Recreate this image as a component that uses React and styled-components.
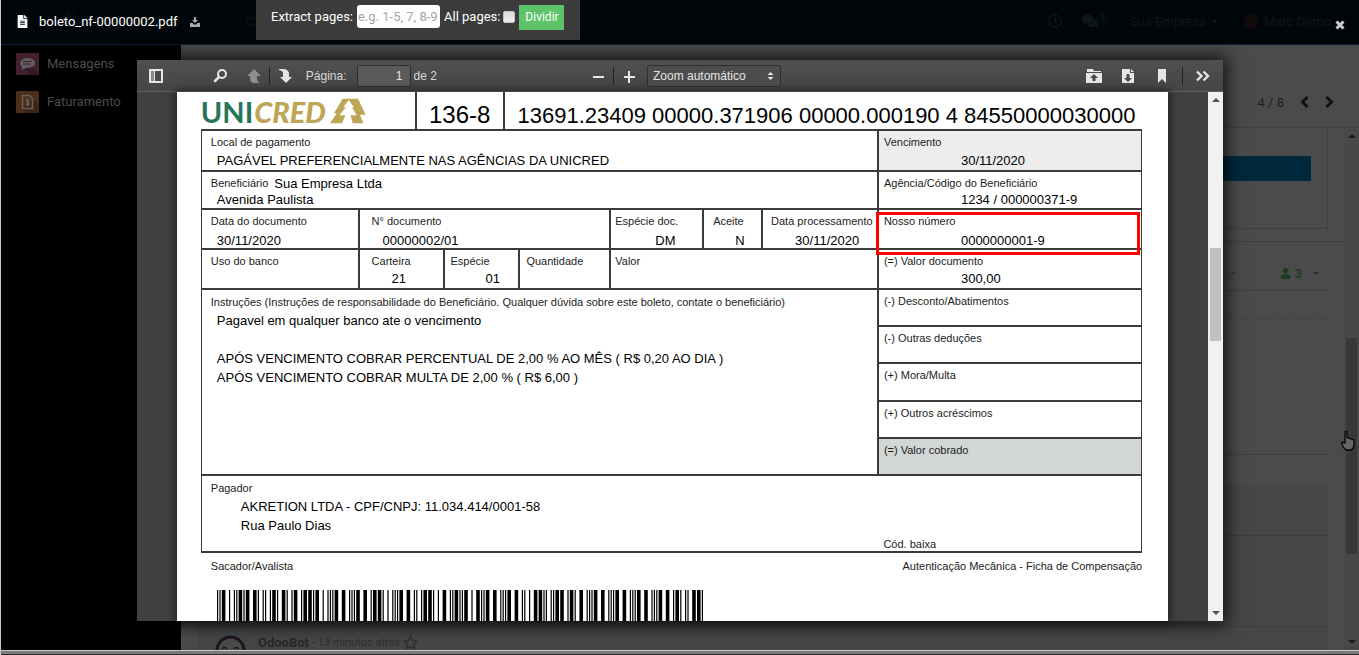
import React from "react";
import styled, { createGlobalStyle, css } from "styled-components";
import { FaFileAlt, FaUser, FaRegStar, FaRegClock, FaComments } from "react-icons/fa";

const GlobalStyle = createGlobalStyle`
  *, *::before, *::after { box-sizing: border-box; }
  html, body, #root { height: 100%; }
  body { margin: 0; overflow: hidden; background: #4b4b4b; }
  h1, h2, p { margin: 0; font-size: inherit; font-weight: inherit; }
  button { margin: 0; padding: 0; border: 0; background: none; color: inherit; font: inherit; cursor: pointer; }
`;

const ui = css`
  font-family: Roboto, "Noto Sans", sans-serif;
  font-size: 13px;
`;

const Screen = styled.div`
  ${ui}
  position: relative;
  display: flex;
  flex-direction: column;
  height: 100%;
  border-left: 1px solid #c8c8c8;
  overflow: hidden;
`;

/* ---------- dimmed application behind the viewer ---------- */

const AppHeader = styled.header`
  display: flex;
  align-items: center;
  flex: none;
  height: 45px;
  padding: 0 28px 2px 64px;
  background: #00060a;
  border-bottom: 1px solid #1c1a33;
  color: #0e171a;
`;

const AppName = styled.h2`
  font-size: 20px;
  color: #0a1114;
  width: 181px;
`;

const HeaderTools = styled.div`
  display: flex;
  align-items: center;
  margin-left: auto;
`;

const ToolItem = styled.span`
  display: flex;
  align-items: center;
  gap: 6px;
  margin-left: ${(p) => p.$gap || 20}px;
`;

const Badge = styled.span`
  padding: 0 4px;
  margin: -8px 0 0 -8px;
  border-radius: 8px;
  background: #000c09;
  font-size: 11px;
  color: #0d1f18;
`;

const Avatar = styled.span`
  width: 14px;
  height: 16px;
  border-radius: 8px;
  background: #120a0a;
`;

const AppBody = styled.div`
  display: flex;
  flex: 1;
  min-height: 0;
`;

const Sidebar = styled.nav`
  flex: none;
  width: 180px;
  padding: 8px 15px;
  background: #000;
`;

const SidebarLink = styled.a`
  display: flex;
  align-items: center;
  gap: 8px;
  height: 24px;
  margin-bottom: 14px;
  padding-bottom: 2px;
  color: #4d4d4d;
  line-height: 18px;
  text-decoration: none;
`;

const AppIcon = styled.svg`
  width: 23px;
  height: 22px;
  flex: none;
`;

const Main = styled.main`
  display: flex;
  flex-direction: column;
  flex: 1;
  min-width: 0;
  background: #4b4b4b;
`;

const Pager = styled.div`
  display: flex;
  justify-content: flex-end;
  align-items: flex-end;
  gap: 16px;
  flex: none;
  height: 83px;
  padding: 0 25px 17px 0;
  border-bottom: 1px solid #424242;
  color: #1e1e1e;
`;

const PagerButton = styled.button`
  width: 9px;
  height: 16px;
  svg { display: block; }
`;

const Scroller = styled.div`
  display: flex;
  flex: 1;
  min-height: 0;
`;

const Content = styled.div`
  flex: 1;
  min-width: 0;
  display: flex;
  flex-direction: column;
`;

const Sheet = styled.section`
  flex: none;
  height: 101px;
  margin: 0 16px 12px;
  padding: 28px 16px 0;
  border: 1px solid #404040;
  border-top: 0;
`;

const SheetBar = styled.div`
  height: 25px;
  background: #00293b;
`;

const Chatter = styled.section`
  flex: 1;
  display: flex;
  flex-direction: column;
  padding: 0 16px;
  border-top: 1px solid #404040;
`;

const Followers = styled.div`
  display: flex;
  justify-content: flex-end;
  align-items: center;
  flex: none;
  gap: 44px;
  height: 49px;
  padding: 15px 9px 0 0;
  border-bottom: 1px solid #404040;
  color: #2c402d;
`;

const FollowerCount = styled.span`
  display: flex;
  align-items: center;
  gap: 4px;
  color: #1d3c1f;
  font-weight: 700;
  span { margin-left: 7px; }
`;

const Composer = styled.div`
  flex: none;
  height: 164px;
  border-bottom: 1px solid #404040;
  &::before {
    content: "";
    display: block;
    height: 28px;
    border-bottom: 1px dashed #404040;
  }
`;

const Messages = styled.div`
  flex: 1;
  display: flex;
  flex-direction: column;
  margin-top: 30px;
  background: #444746;
`;

const Message = styled.div`
  display: flex;
  flex: none;
  height: ${(p) => p.$height}px;
  border-bottom: 1px solid #3b3e3d;
`;

const BotMessage = styled.div`
  display: flex;
  align-items: flex-start;
  gap: 3px;
  padding: 8px 18px;
  color: #2d2f2f;
  font-size: 11px;
  line-height: 16px;
  b { margin-left: 9px; font-size: 13px; color: #262828; }
`;

/* ---------- scrollbars ---------- */

const Track = styled.div`
  display: flex;
  flex-direction: column;
  align-items: center;
  flex: none;
  width: 15px;
  background: ${(p) => (p.$dim ? "#484848" : "#f1f1f1")};
  color: ${(p) => (p.$dim ? "#1a1a1a" : "#505050")};
`;

const Space = styled.div`
  flex: ${(p) => p.$part} 0 0;
`;

const Thumb = styled.div`
  flex: ${(p) => p.$part} 0 0;
  width: 11px;
  background: ${(p) => (p.$dim ? "#383838" : "#c1c1c1")};
`;

const Triangle = styled.span`
  margin: 6px 0;
  border: ${(p) => p.$size || 4}px solid transparent;
  ${(p) =>
    p.$up
      ? "border-top-width: 0; border-bottom-color: currentColor;"
      : "border-bottom-width: 0; border-top-color: currentColor;"}
`;

function Scrollbar({ dim, before, thumb, after }) {
  return (
    <Track $dim={dim}>
      <Triangle $up />
      <Space $part={before} />
      <Thumb $part={thumb} $dim={dim} />
      <Space $part={after} />
      <Triangle />
    </Track>
  );
}

/* ---------- viewer overlay ---------- */

const TitleBar = styled.div`
  position: absolute;
  top: 0;
  left: 0;
  right: 0;
  display: flex;
  align-items: flex-start;
  color: #fff;
`;

const FileTitle = styled.div`
  display: flex;
  align-items: center;
  width: 255px;
  height: 43px;
  padding-left: 15px;
  gap: 10px;
`;

const DownloadLink = styled.a`
  display: flex;
  margin-left: 2px;
  color: #aaa;
`;

const SplitForm = styled.form`
  display: flex;
  align-items: flex-start;
  gap: 4px;
  height: 40px;
  padding: 5px 16px 5px 15px;
  background: #3c3c3c;
  line-height: 23px;
`;

const PagesInput = styled.input`
  ${ui}
  width: 83px;
  height: 23px;
  padding: 0 1px;
  border: 0;
  border-radius: 3px;
  background: #fff;
  &::placeholder { color: #a5a5a5; opacity: 1; }
`;

const AllPages = styled.input`
  appearance: none;
  width: 12px;
  height: 12px;
  margin: 6px 0 0 -1px;
  border: 1px solid #c4c4c4;
  border-radius: 2px;
  background: linear-gradient(#dcdcdc, #efefef);
`;

const SplitButton = styled.button`
  width: 45px;
  height: 25px;
  background: #5dc268;
  color: #fff;
  font-size: 12px;
`;

const CloseButton = styled.button`
  display: flex;
  margin: 20px 14px 0 auto;
`;

const Viewer = styled.section`
  position: absolute;
  top: 60px;
  bottom: 34px;
  left: 10%;
  right: 10%;
  display: flex;
  flex-direction: column;
  background: #404040;
  box-shadow: 0 0 16px 4px rgba(0, 0, 0, 0.75);
`;

const Toolbar = styled.div`
  display: grid;
  grid-template-columns: 1fr auto 1fr;
  flex: none;
  height: 32px;
  border-bottom: 1px solid #606060;
  background: linear-gradient(#505050, #454545);
  color: #d9d9d9;
  font: 12px/16px "Liberation Sans", Arial, sans-serif;
`;

const Group = styled.div`
  display: flex;
  align-items: center;
  justify-content: ${(p) => p.$align || "flex-start"};
  padding: ${(p) => p.$pad || "0"};
`;

const ToolButton = styled.button`
  display: flex;
  align-items: center;
  justify-content: center;
  width: 24px;
  height: 24px;
  margin-left: ${(p) => p.$gap || 0}px;
  color: ${(p) => (p.$off ? "#8f8f8f" : "#e6e6e6")};
`;

const Separator = styled.span`
  width: 1px;
  height: 18px;
  margin: 0 ${(p) => p.$gap || 3}px;
  background: #222;
`;

const PageLabel = styled.label`
  display: flex;
  align-items: center;
  gap: 10px;
  margin: 0 3px 0 9px;
`;

const field = css`
  height: 22px;
  border: 1px solid #2f2f2f;
  border-radius: 2px;
  color: #e4e4e4;
  font: inherit;
`;

const PageInput = styled.input`
  ${field}
  width: 54px;
  padding: 0 7px;
  background: #5a5a5a;
  text-align: right;
`;

const SelectWrap = styled.div`
  display: flex;
  align-items: center;
  margin-left: 6px;
  color: #e4e4e4;
  svg { margin-left: -14px; pointer-events: none; }
`;

const ZoomSelect = styled.select`
  ${field}
  appearance: none;
  width: 134px;
  padding: 0 5px;
  background: #4d4d4d;
`;

const Stage = styled.div`
  display: flex;
  flex: 1;
  min-height: 0;
`;

const Paper = styled.article`
  flex: 1;
  min-width: 0;
  margin: 0 40px;
  padding: 0 26px 0 24px;
  overflow: hidden;
  background: #fff;
  box-shadow: 0 0 8px 2px rgba(0, 0, 0, 0.5);
  color: #000;
  font: 13px/18px "Liberation Sans", Arial, sans-serif;
`;

/* ---------- boleto ---------- */

const LINE = "2px solid #3c3a3c";

const BankRow = styled.div`
  display: flex;
  height: 37px;
`;

const Brand = styled.div`
  display: flex;
  flex: 216 0 0;
  min-width: 0;
  gap: 1px;
  padding-top: 1px;
  font: 700 29px/38px Lato, "Open Sans", sans-serif;
  color: #26745b;
  b { font-weight: 900; font-style: italic; color: #bda656; }
  svg { flex: none; margin: 5px 0 0 3px; }
`;

const BankCode = styled.div`
  flex: 87 0 0;
  border: ${LINE};
  border-width: 0 2px;
  text-align: center;
  font-size: 24px;
  line-height: 46px;
`;

const DigitLine = styled.div`
  flex: 638 0 0;
  min-width: 0;
  padding-left: 6px;
  white-space: nowrap;
  text-align: center;
  font-size: 22px;
  line-height: 47px;
`;

const Slip = styled.div`
  border: ${LINE};
  border-width: 0 1px 2px;
`;

const Columns = styled.div`
  display: flex;
`;

const LeftColumn = styled.div`
  flex: 677 0 0;
  min-width: 0;
`;

const RightColumn = styled.div`
  flex: 263 0 0;
  min-width: 0;
  display: flex;
  flex-direction: column;
  border-left: ${LINE};
`;

const Row = styled.div`
  display: grid;
  grid-template-columns: ${(p) => p.$cols || "1fr"};
  height: ${(p) => p.$height}px;
  border-top: ${LINE};
`;

const Cell = styled.div`
  position: relative;
  display: flex;
  flex-direction: column;
  justify-content: space-between;
  min-width: 0;
  padding: 3px 0 0 ${(p) => p.$pad || 5}px;
  background: ${(p) => p.$fill || "transparent"};
  white-space: nowrap;
  & + & { border-left: ${LINE}; }
`;

const AmountCell = styled.div`
  flex: 1;
  padding: 3px 0 0 5px;
  border-top: ${LINE};
  background: ${(p) => p.$fill || "transparent"};
  line-height: 16px;
`;

const Label = styled.span`
  font: 11px/16px "Liberation Sans", Arial, sans-serif;
  color: #1c1c1c;
`;

const Value = styled.span`
  margin-left: ${(p) => p.$indent || 0}px;
  margin-bottom: ${(p) => (p.$low ? -2 : 0)}px;
`;

const Inline = styled.div`
  display: flex;
  gap: 6px;
  height: 16px;
`;

const Notes = styled.div`
  padding: 3px 9px;
  height: ${(p) => p.$height}px;
  border-top: ${LINE};
  white-space: nowrap;
`;

const NoteLines = styled.div`
  padding: 0 0 0 ${(p) => p.$indent}px;
  line-height: 19px;
  p { min-height: 19px; }
`;

const LowerCode = styled.div`
  padding-left: 73%;
`;

const FooterRow = styled.div`
  display: flex;
  justify-content: space-between;
  padding: 5px 0 0 10px;
`;

const Highlight = styled.div`
  position: absolute;
  inset: 2px 1px -7px -3px;
  border: 3px solid #f00;
`;

const Barcode = styled.svg`
  display: block;
  width: 486px;
  height: 60px;
  margin: 16px 0 0 16px;
`;

const BottomEdge = styled.footer`
  flex: none;
  height: 5px;
  border-top: 1px solid #c9c7c7;
  border-bottom: 1px solid #2b2b2b;
  background: #7d7a7a;
`;

const Pointer = styled.svg`
  position: absolute;
  right: 4px;
  top: 430px;
`;

/* Interleaved 2 of 5: bars carry the first digit of a pair, spaces the second. */
const PATTERNS = ["00110", "10001", "01001", "11000", "00101", "10100", "01100", "00011", "10010", "01010"];

function barcodeBars(digits) {
  const widths = [1, 1, 1, 1];
  for (let i = 0; i < digits.length; i += 2) {
    const a = PATTERNS[digits[i]];
    const b = PATTERNS[digits[i + 1]];
    for (let k = 0; k < 5; k++) widths.push(a[k] === "1" ? 3 : 1, b[k] === "1" ? 3 : 1);
  }
  widths.push(3, 1, 1);
  let x = 0;
  const bars = [];
  widths.forEach((w, i) => {
    if (i % 2 === 0) bars.push({ x, w });
    x += w;
  });
  return { bars, total: x };
}

const code = barcodeBars("13694845500000300001234000000371900000000019");

const Icon = ({ size = 16, children }) => (
  <svg width={size} height={size} viewBox="0 0 16 16" fill="currentColor" aria-hidden="true">
    {children}
  </svg>
);

const Chevron = ({ flip }) => (
  <svg width="9" height="14" viewBox="0 0 9 14" fill="none" stroke="#111" strokeWidth="3" aria-hidden="true">
    <path d={flip ? "M1.5 2 L6.5 7 L1.5 12" : "M7.5 2 L2.5 7 L7.5 12"} />
  </svg>
);

function Background() {
  return (
    <>
      <AppHeader>
        <AppName>Faturamento</AppName>
        <span>Cl</span>
        <HeaderTools>
          <ToolItem><FaRegClock size={14} /></ToolItem>
          <ToolItem><FaComments size={16} /><Badge>1</Badge></ToolItem>
          <ToolItem>Sua Empresa <Triangle $size={3} /></ToolItem>
          <ToolItem $gap={26}><Avatar />Marc Demo</ToolItem>
        </HeaderTools>
      </AppHeader>
      <AppBody>
        <Sidebar>
          <SidebarLink href="#mensagens">
            <AppIcon viewBox="0 0 23 22">
              <rect width="23" height="22" rx="1" fill="#431f2f" />
              <path d="M7 15 L16 14 L23 20 V22 H12Z" fill="#371a27" />
              <ellipse cx="11.500" cy="10" rx="7.500" ry="5" fill="#5f5f5f" />
              <path d="M6 12 V17 L12 14Z" fill="#5f5f5f" />
              <path d="M7 8.500h9M7 11h8" stroke="#431f2f" />
            </AppIcon>
            Mensagens
          </SidebarLink>
          <SidebarLink href="#faturamento">
            <AppIcon viewBox="0 0 23 22">
              <rect width="23" height="22" rx="1" fill="#4c2f1b" />
              <path d="M17 8 L23 13 V22 H10 L6 18Z" fill="#3c2617" />
              <path d="M6.500 4.500h7l3 3v10h-10z" fill="none" stroke="#686058" strokeWidth="1.500" />
              <path d="M13.500 8.800h-3v2.200h2.500v2.600h-3M11.500 7.500v7.500" fill="none" stroke="#686058" strokeWidth="1.200" />
            </AppIcon>
            Faturamento
          </SidebarLink>
        </Sidebar>
        <Main>
          <Pager>
            <span>4 / 8</span>
            <PagerButton aria-label="Anterior"><Chevron /></PagerButton>
            <PagerButton aria-label="Próximo"><Chevron flip /></PagerButton>
          </Pager>
          <Scroller>
            <Content>
              <Sheet><SheetBar /></Sheet>
              <Chatter>
                <Followers>
                  <Triangle $size={3} />
                  <FollowerCount><FaUser size={11} />3<Triangle $size={3} /></FollowerCount>
                </Followers>
                <Composer />
                <Messages>
                  <Message $height={51} />
                  <Message $height={91} />
                  <BotMessage>
                    <svg width="31" height="31" viewBox="0 0 31 31" fill="none" aria-hidden="true">
                      <circle cx="15.500" cy="15.500" r="13.500" fill="#4b4b4b" stroke="#1f1420" strokeWidth="3" />
                      <path d="M7 14q2.500-3 5 0M19 14q2.500-3 5 0" stroke="#1f1420" strokeWidth="1.500" />
                    </svg>
                    <b>OdooBot</b> - 13 minutos atrás <FaRegStar size={15} />
                  </BotMessage>
                </Messages>
              </Chatter>
            </Content>
            <Scrollbar dim before={194} thumb={216} after={80} />
          </Scroller>
        </Main>
      </AppBody>
      <BottomEdge />
    </>
  );
}

function ViewerToolbar() {
  return (
    <Toolbar>
      <Group $pad="0 0 0 7px">
        <ToolButton aria-label="Painel lateral">
          <Icon>
            <path fillRule="evenodd" d="M1 1h14v14H1zM3 3v10h3V3zM7 3v10h6V3z" />
            <path d="M3 3h3v10H3z" opacity=".4" />
          </Icon>
        </ToolButton>
        <ToolButton $gap={40} aria-label="Localizar">
          <Icon>
            <circle cx="10" cy="6" r="4" fill="none" stroke="currentColor" strokeWidth="2" />
            <path d="M7 9 L3 13" stroke="currentColor" strokeWidth="2.600" strokeLinecap="round" />
          </Icon>
        </ToolButton>
        <ToolButton $gap={10} $off aria-label="Página anterior">
          <Icon><path d="M8 1l7 7h-4v3q0 2 2 3v1H7q-3-1-3-5V8H1z" /></Icon>
        </ToolButton>
        <Separator />
        <ToolButton aria-label="Próxima página">
          <Icon><path d="M2 1h4q5 0 6 4v4h3l-6 6-6-6h3V5q0-2-4-3z" /></Icon>
        </ToolButton>
        <PageLabel>
          Página:
          <PageInput defaultValue="1" />
        </PageLabel>
        de 2
      </Group>
      <Group>
        <ToolButton aria-label="Reduzir"><Icon><path d="M3 8h11v2H3z" /></Icon></ToolButton>
        <Separator />
        <ToolButton aria-label="Ampliar"><Icon><path d="M7 3h2v5h5v2H9v5H7v-5H3V8h4z" /></Icon></ToolButton>
        <SelectWrap>
          <ZoomSelect aria-label="Zoom"><option>Zoom automático</option></ZoomSelect>
          <svg width="7" height="8" viewBox="0 0 7 8" fill="currentColor" aria-hidden="true">
            <path d="M3.500 0 L6.500 3h-6zM3.500 8 L.5 5h6z" />
          </svg>
        </SelectWrap>
      </Group>
      <Group $align="flex-end" $pad="0 8px 0 0">
        <ToolButton aria-label="Abrir">
          <Icon><path fillRule="evenodd" d="M1 1h6l1 2h7v1H1zM0 5h16v10H0zM8 6l-4 4h2.500v3h3v-3H12z" /></Icon>
        </ToolButton>
        <ToolButton $gap={10} aria-label="Baixar">
          <Icon><path fillRule="evenodd" d="M2 1h8v4h4v10H2zM11 1l3 3h-3zM6.500 6v4H4l4 4 4-4H9.500V6z" /></Icon>
        </ToolButton>
        <ToolButton $gap={10} aria-label="Marcador">
          <Icon><path d="M4 1h8v14l-4-4-4 4z" /></Icon>
        </ToolButton>
        <Separator $gap={8} />
        <ToolButton aria-label="Ferramentas">
          <Icon>
            <path d="M2 3.500 L6.500 8 L2 12.500M8.500 3.500 L13 8 L8.500 12.500" fill="none" stroke="currentColor" strokeWidth="2.400" />
          </Icon>
        </ToolButton>
      </Group>
    </Toolbar>
  );
}

function Field({ label, value, indent, pad, fill, low, children }) {
  return (
    <Cell $pad={pad} $fill={fill}>
      <Label>{label}</Label>
      {value && <Value $indent={indent} $low={low}>{value}</Value>}
      {children}
    </Cell>
  );
}

const deductions = ["(-) Desconto/Abatimentos", "(-) Outras deduções", "(+) Mora/Multa", "(+) Outros acréscimos"];

function Boleto() {
  return (
    <Paper>
      <BankRow>
        <Brand>
          <span>UNI</span>
          <b>CRED</b>
          <svg width="36" height="26" viewBox="0 0 108 78" fill="#bda656" aria-hidden="true">
            <path d="M38 2H84L107 50H90L100 76H68L62 52H80L66 28H72L56 6L40 28H48L28 52H46L36 76H0L20 46H12Z" />
          </svg>
        </Brand>
        <BankCode>136-8</BankCode>
        <DigitLine>13691.23409 00000.371906 00000.000190 4 84550000030000</DigitLine>
      </BankRow>
      <Slip>
        <Columns>
          <LeftColumn>
            <Row $height={41}>
              <Field pad={9} label="Local de pagamento" indent={6} value="PAGÁVEL PREFERENCIALMENTE NAS AGÊNCIAS DA UNICRED" />
            </Row>
            <Row $height={38}>
              <Cell $pad={9}>
                <Inline><Label>Beneficiário</Label><Value>Sua Empresa Ltda</Value></Inline>
                <Value $indent={6}>Avenida Paulista</Value>
              </Cell>
            </Row>
            <Row $height={40} $cols="156fr 252fr 93fr 59fr 116fr">
              <Field low pad={9} label="Data do documento" indent={6} value="30/11/2020" />
              <Field low pad={12} label="N° documento" indent={11} value="00000002/01" />
              <Field low pad={4} label="Espécie doc." indent={40} value="DM" />
              <Field low pad={9} label="Aceite" indent={22} value="N" />
              <Field low pad={8} label="Data processamento" indent={24} value="30/11/2020" />
            </Row>
            <Row $height={40} $cols="156fr 86fr 75fr 91fr 268fr">
              <Field pad={9} label="Uso do banco" />
              <Field pad={12} label="Carteira" indent={20} value="21" />
              <Field label="Espécie" indent={35} value="01" />
              <Field pad={6} label="Quantidade" />
              <Field pad={4} label="Valor" />
            </Row>
            <Notes $height={186}>
              <Label>Instruções (Instruções de responsabilidade do Beneficiário. Qualquer dúvida sobre este boleto, contate o beneficiário)</Label>
              <NoteLines $indent={6}>
                <p>Pagavel em qualquer banco ate o vencimento</p>
                <p />
                <p>APÓS VENCIMENTO COBRAR PERCENTUAL DE 2,00 % AO MÊS ( R$ 0,20 AO DIA )</p>
                <p>APÓS VENCIMENTO COBRAR MULTA DE 2,00 % ( R$ 6,00 )</p>
              </NoteLines>
            </Notes>
          </LeftColumn>
          <RightColumn>
            <Row $height={41}>
              <Field fill="#ededed" label="Vencimento" indent={77} value="30/11/2020" />
            </Row>
            <Row $height={38}>
              <Field label="Agência/Código do Beneficiário" indent={77} value="1234 / 000000371-9" />
            </Row>
            <Row $height={40}>
              <Field low label="Nosso número" indent={77} value="0000000001-9"><Highlight /></Field>
            </Row>
            <Row $height={40}>
              <Field label="(=) Valor documento" indent={77} value="300,00" />
            </Row>
            {deductions.map((text) => (
              <AmountCell key={text}><Label>{text}</Label></AmountCell>
            ))}
            <AmountCell $fill="#d2d6d5"><Label>(=) Valor cobrado</Label></AmountCell>
          </RightColumn>
        </Columns>
        <Notes $height={77}>
          <Label>Pagador</Label>
          <NoteLines $indent={30}>
            <p>AKRETION LTDA - CPF/CNPJ: 11.034.414/0001-58</p>
            <p>Rua Paulo Dias</p>
          </NoteLines>
          <LowerCode><Label>Cód. baixa</Label></LowerCode>
        </Notes>
      </Slip>
      <FooterRow>
        <Label>Sacador/Avalista</Label>
        <Label>Autenticação Mecânica - Ficha de Compensação</Label>
      </FooterRow>
      <Barcode viewBox={`0 0 ${code.total} 60`} preserveAspectRatio="none" role="img" aria-label="Código de barras">
        {code.bars.map((b) => (
          <rect key={b.x} x={b.x} y="0" width={b.w} height="60" />
        ))}
      </Barcode>
    </Paper>
  );
}

export default function App() {
  return (
    <Screen>
      <GlobalStyle />
      <Background />
      <TitleBar>
        <FileTitle>
          <FaFileAlt size={13} />
          <h1>boleto_nf-00000002.pdf</h1>
          <DownloadLink href="#download" aria-label="Baixar arquivo">
            <svg width="10" height="10" viewBox="0 0 10 10" fill="currentColor" aria-hidden="true">
              <path d="M4 0h2v3h2L5 6 2 3h2zM0 6h2.500L4 7.500h2L7.500 6H10v4H0z" />
            </svg>
          </DownloadLink>
        </FileTitle>
        <SplitForm onSubmit={(e) => e.preventDefault()}>
          <label htmlFor="pages">Extract pages:</label>
          <PagesInput id="pages" placeholder="e.g. 1-5, 7, 8-9" />
          <label htmlFor="all-pages">All pages:</label>
          <AllPages id="all-pages" type="checkbox" />
          <SplitButton>Dividir</SplitButton>
        </SplitForm>
        <CloseButton aria-label="Fechar">
          <svg width="10" height="10" viewBox="0 0 10 10" stroke="#ccc" strokeWidth="3" aria-hidden="true">
            <path d="M1.500 1.500 L8.500 8.500M8.500 1.500 L1.500 8.500" />
          </svg>
        </CloseButton>
      </TitleBar>
      <Viewer>
        <ViewerToolbar />
        <Stage>
          <Boleto />
          <Scrollbar before={141} thumb={93} after={265} />
        </Stage>
      </Viewer>
      <Pointer width="14" height="21" viewBox="0 0 14 21" aria-hidden="true">
        <path
          d="M4 1.500q1.500-1 2 1v5l6 2q1 0 1 2v4q-1 4-3 4.500H5q-3-2-4.500-7 1-1.500 3.500 0z"
          fill="#666"
          stroke="#050505"
          strokeWidth="1.300"
        />
      </Pointer>
    </Screen>
  );
}
